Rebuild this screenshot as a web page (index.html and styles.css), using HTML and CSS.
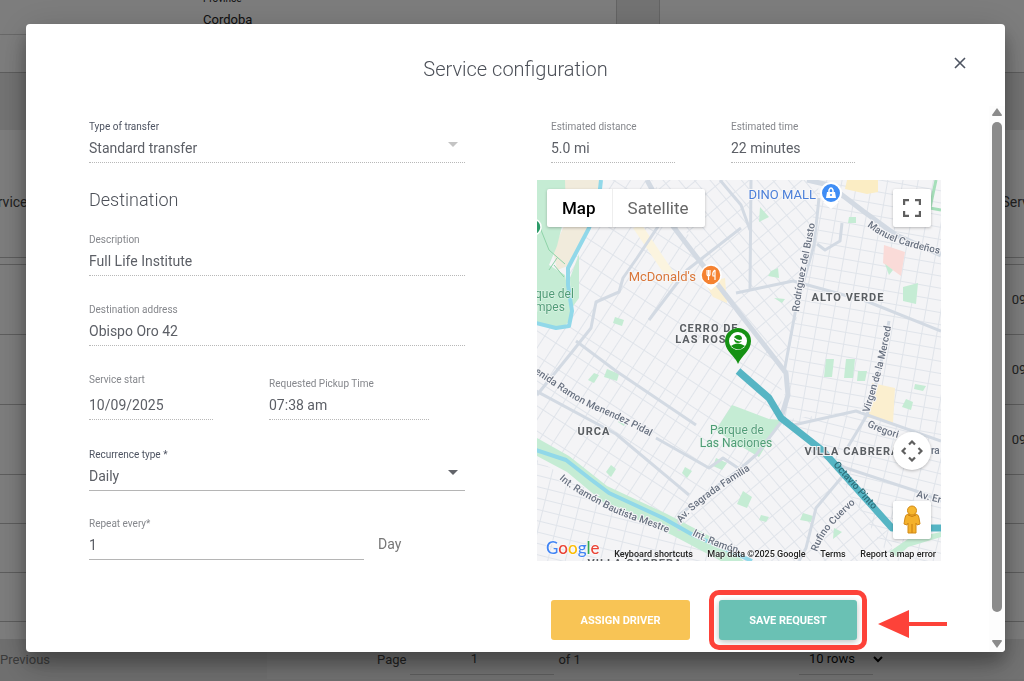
FILE: index.html
```html
<!DOCTYPE html>
<html lang="en">
<head>
<meta charset="utf-8">
<title>Service configuration</title>
<link rel="stylesheet" href="styles.css">
</head>
<body>
<div class="page">
  <div class="cards">
    <section class="card card-main">
      <div class="province"><span class="province-label">Province</span><span>Cordoba</span></div>
      <div class="card-row"></div>
    </section>
    <section class="card card-side"></section>
  </div>
  <section class="list">
    <div class="list-head"><span>Service</span><span>Service</span></div>
    <div class="list-gap"></div>
    <div class="list-row"><span>09:00</span></div>
    <div class="list-row"><span>09:00</span></div>
    <div class="list-row"><span>09:00</span></div>
    <div class="list-row short"></div>
    <div class="list-row short"></div>
    <div class="list-row short"></div>
  </section>
  <footer class="pager">
    <button class="pager-prev" type="button">Previous</button>
    <div class="pager-page"><label for="page">Page</label><input id="page" value="1"><span>of 1</span></div>
    <div class="pager-size">
      <select aria-label="Rows per page"><option>10 rows</option></select>
      <svg width="10" height="7" viewBox="0 0 10 7"><path d="M1 1l4 4 4-4" fill="none" stroke="#000" stroke-width="2"/></svg>
    </div>
  </footer>
</div>

<div class="overlay">
  <div class="modal" role="dialog" aria-labelledby="title">
    <header class="modal-head">
      <h1 id="title">Service configuration</h1>
      <button class="close" type="button" aria-label="Close"><svg width="12" height="12" viewBox="0 0 12 12"><path d="M1 1l10 10M11 1L1 11" stroke="#4d5461" stroke-width="1.6"/></svg></button>
    </header>
    <div class="modal-body">
      <form class="form">
        <div class="column">
          <div class="field strong muted">
            <label for="type">Type of transfer</label>
            <select id="type"><option>Standard transfer</option></select>
            <svg class="caret" width="10" height="5" viewBox="0 0 10 5"><path d="M0 0h10L5 5z"/></svg>
          </div>
          <h2>Destination</h2>
          <div class="field"><label for="desc">Description</label><input id="desc" value="Full Life Institute"></div>
          <div class="field next"><label for="addr">Destination address</label><input id="addr" value="Obispo Oro 42"></div>
          <div class="schedule">
            <div class="field tall"><label for="start">Service start</label><input id="start" value="10/09/2025"></div>
            <div class="field"><label for="pickup">Requested Pickup Time</label><input id="pickup" value="07:38 am"></div>
          </div>
          <div class="field solid strong recurrence">
            <label for="rec">Recurrence type *</label>
            <select id="rec"><option>Daily</option></select>
            <svg class="caret" width="10" height="5" viewBox="0 0 10 5"><path d="M0 0h10L5 5z"/></svg>
          </div>
          <div class="repeat">
            <div class="field solid"><label for="rep">Repeat every*</label><input id="rep" value="1"></div>
            <span>Day</span>
          </div>
        </div>

        <div class="column">
          <div class="estimates">
            <div class="field"><label for="dist">Estimated distance</label><input id="dist" value="5.0 mi" readonly></div>
            <div class="field"><label for="time">Estimated time</label><input id="time" value="22 minutes" readonly></div>
          </div>
          <div class="map">
            <svg class="map-art" viewBox="0 0 404 381" role="img" aria-label="Route map">
              <defs>
                <pattern id="g1" width="13" height="21" patternUnits="userSpaceOnUse" patternTransform="rotate(33)"><path d="M0 0H13M0 0V21" class="st"/></pattern>
                <pattern id="g2" width="15" height="12" patternUnits="userSpaceOnUse" patternTransform="rotate(10)"><path d="M0 0H15M0 0V12" class="st"/></pattern>
                <pattern id="g3" width="12" height="17" patternUnits="userSpaceOnUse" patternTransform="rotate(-40)"><path d="M0 0H12M0 0V17" class="st"/></pattern>
                <pattern id="g4" width="17" height="11" patternUnits="userSpaceOnUse" patternTransform="rotate(14)"><path d="M0 0H17M0 0V11" class="st"/></pattern>
                <path id="p-ave" d="M-7 190C25 211 35 220 58 230S95 246 134 268"/>
                <path id="p-int" d="M22 299C38 313 50 318 70 329S112 343 146 360"/>
                <path id="p-int2" d="M155 355Q183 370 215 377"/>
                <path id="p-sag" d="M144 343C155 329 173 315 218 287"/>
                <path id="p-rod" d="M262 132C265 103 272 78 280 32"/>
                <path id="p-man" d="M330 46C350 62 370 67 412 76"/>
                <path id="p-vir" d="M332 233C340 207 349 180 356 134"/>
                <path id="p-oct" d="M296 285L346 341"/>
                <path id="p-ruf" d="M280 372C287 352 299 340 330 313"/>
                <path id="p-gre" d="M330 246Q344 254 368 260"/>
              </defs>
              <rect width="404" height="381" fill="#f4f4f6"/>
              <path d="M64 0H115L205 135 245 190 244 238 205 290 140 345 0 270V140L32 146V88z" fill="url(#g1)"/>
              <path d="M115 0H282L277 65 247 193 204 135z" fill="url(#g3)"/>
              <path d="M282 0H404V261L319 231 244 246 250 190z" fill="url(#g2)"/>
              <path d="M244 240L319 231 404 261V381H355L286 271z" fill="url(#g4)"/>
              <path d="M244 240L355 348V381H190L140 345 204 290z" fill="url(#g3)"/>
              <path d="M0 280L72 322 190 381H0z" fill="url(#g4)"/>

              <path d="M26 0H64L61 20 51 49 31 86 20 90 16 70 28 44z" fill="#f1ebdc"/>
              <path d="M310 0H341V12L330 14 308 9z" fill="#fbedc4"/>
              <path d="M96 48L105 45 140 97 134 104z" fill="#fbf4df"/>
              <path d="M168 103L188 98 190 123 176 117z" fill="#fbf0d3"/>
              <path d="M335 203L358 208 356 243 329 237z" fill="#fbefcf"/>
              <path d="M347 65L368 72 364 96 346 83z" fill="#fadbd8"/>
              <g fill="#c5ecd4">
                <path d="M0 0H28L29 30 20 66 12 85 28 95 31 112 35 139 25 148 0 145z"/>
                <path d="M42 74L42 118 34 129 33 98z"/>
                <path d="M0 258L32 276 70 306 130 334 180 360 207 381H184L135 355 72 327 30 292 0 276z"/>
                <path d="M195 225L232 239 244 240 222 277 193 260 179 250z"/>
                <path d="M223 27L232 37 222 42zM312 37H319V43H311zM234 91L241 88 242 98 231 96zM237 118L248 119 245 123zM366 107L381 103 379 124 366 121zM348 84L356 90 352 95zM78 137L87 140 85 146 76 143z"/>
                <path d="M57 193L62 195 57 203 51 200zM70 189L82 194 80 201 67 197zM74 285L79 289 74 297 69 292zM179 278L190 283 185 290 176 286zM148 287L155 291 150 298 145 293zM84 238L90 241 87 246 81 242z"/>
                <path d="M289 179H297L295 197H287zM309 179H318L316 198H307zM321 191H330L328 201H320zM378 204L389 206 386 211 377 209zM369 219L376 222 374 230 365 227zM206 311L215 317 210 328 200 324zM266 333L276 336 274 342 263 340zM297 348L305 352 296 359zM224 335L232 337 229 342 222 340z"/>
                <path d="M352 372L371 359 404 352V357L371 367 360 377z"/>
              </g>
              <path d="M399 0L393 28 404 30" fill="none" stroke="#a6dfba" stroke-width="3"/>
              <g fill="none" stroke="#d3dae3" stroke-width="3" stroke-linejoin="round">
                <path d="M110 0L132 41 204 135 249 193 251 215 244 238" stroke-width="5"/>
                <path d="M122 45L100 78 86 98 82 112 59 122 54 148 35 172 0 215"/>
                <path d="M-1 211L79 254 152 315M39 161L79 191 159 245M119 258L172 288 186 278 204 290"/>
                <path d="M214 0L213 110M199 113L256 101 329 121 404 151"/>
                <path d="M282 18L277 65 259 128 247 193"/>
                <path d="M270 0L292 5 326 31 359 55 404 75" stroke-width="5"/>
                <path d="M252 246L319 231 404 261M352 141L342 193 330 235 309 270M269 268L309 288 379 311 404 321"/>
                <path d="M309 292L279 328 269 368 262 381M142 351V335L204 288 219 275 245 241"/>
                <path d="M204 48L150 90 112 140M305 43L303 61 288 70 280 64M183 0L204 25 213 50"/>
              </g>
              <g fill="none" stroke="#91d8e9" stroke-width="4" stroke-linejoin="round">
                <path d="M64 0L62 18 52 48 31 88V105L35 131 32 146 19 148-1 143"/>
                <path d="M-1 270L29 280 52 298 72 313 126 338 156 355 186 368 215 381"/>
              </g>
              <path d="M0 40L12 70 28 84M17 85L27 97M20 78L12 90" fill="none" stroke="#8ed3a8" stroke-width="1"/>
              <path d="M201 191L232 218 244 238 286 271 355 348H404" fill="none" stroke="#56b5c4" stroke-width="7" stroke-linejoin="round"/>

              <g class="road">
                <text><textPath href="#p-ave">venida Ramon Menendez Pidal</textPath></text>
                <text><textPath href="#p-int">Int. Ramón Bautista Mestre</textPath></text>
                <text><textPath href="#p-int2">Int. Ramón</textPath></text>
                <text><textPath href="#p-sag">Av. Sagrada Familia</textPath></text>
                <text><textPath href="#p-rod">Rodríguez del Busto</textPath></text>
                <text><textPath href="#p-man">Manuel Cardeños</textPath></text>
                <text><textPath href="#p-vir">Virgen de la Merced</textPath></text>
                <text class="on-route"><textPath href="#p-oct">Octavio Pinto</textPath></text>
                <text><textPath href="#p-ruf">Rufino Cuervo</textPath></text>
                <text><textPath href="#p-gre">Gregori</textPath></text>
                <text transform="translate(379 317) rotate(14)">Av. Er</text>
                <text x="394" y="274">ra</text>
              </g>
              <g class="district" text-anchor="middle">
                <text x="172" y="152">CERRO DE</text>
                <text x="172" y="163">LAS ROSAS</text>
                <text x="311" y="121">ALTO VERDE</text>
                <text x="57" y="255">URCA</text>
                <text x="315" y="275">VILLA CABRERA</text>
                <text x="98" y="387">VILLA CABRERA</text>
              </g>
              <g class="park">
                <text x="-2" y="118">que del</text><text x="-2" y="131">mpes</text>
                <text x="200" y="254" text-anchor="middle">Parque de</text><text x="199" y="267" text-anchor="middle">Las Naciones</text>
              </g>
              <text class="poi" x="159" y="101" text-anchor="end" fill="#d9773a">McDonald's</text>
              <text class="poi" x="279" y="19" text-anchor="end" fill="#4b7fd9">DINO MALL</text>
              <circle cx="-4" cy="47" r="8" fill="#2b9a68" stroke="#fff" stroke-width="1.5"/>
              <g transform="translate(174 95)"><path d="M-7 9L0 15 7 9z" fill="#fff"/><circle r="10" fill="#f58231" stroke="#fff" stroke-width="1.5"/><path d="M-4-5V-1Q-4 1-2.500 1V5M-1-5V-1Q-1 1-2.500 1M-2.500-5V1M4-5V5M4-5Q1-3 2 1H4" fill="none" stroke="#fff" stroke-width="1.200"/></g>
              <g transform="translate(294 13)"><path d="M-8 9L0 16 8 9z" fill="#fff"/><circle r="10" fill="#3f8df5" stroke="#fff" stroke-width="2"/><path d="M-4-1H4L5 5H-5z" fill="#fff"/><path d="M-2 0V-3Q0-7 2-3V0" fill="none" stroke="#fff" stroke-width="1.500"/><circle cy="2" r="1" fill="#3f8df5"/></g>
              <g transform="translate(201 184)"><path d="M0 0C-3-8-13-13-13-23A13 13 0 0 1 13-23C13-13 3-8 0 0z" fill="#159113"/><circle cy="-23" r="9" fill="#fff"/><circle cy="-25" r="4" fill="#159113"/><path d="M-7-18Q0-23 7-18Q0-11-7-18z" fill="#159113"/><path d="M-4-26Q0-22 4-24" fill="none" stroke="#fff" stroke-width="1.500"/></g>
            </svg>
            <div class="map-type"><button type="button" class="active">Map</button><button type="button">Satellite</button></div>
            <button class="map-btn full" type="button" aria-label="Fullscreen"><svg width="18" height="18" viewBox="0 0 18 18"><path d="M1 6V1H6M12 1H17V6M17 12V17H12M6 17H1V12" fill="none" stroke="#5f5f5f" stroke-width="2.400"/></svg></button>
            <button class="map-btn pan" type="button" aria-label="Camera controls"><svg width="22" height="22" viewBox="0 0 22 22"><path d="M8 4.500L11 1.500 14 4.500M8 17.500L11 20.500 14 17.500M4.500 8L1.500 11 4.500 14M17.500 8L20.500 11 17.500 14" fill="none" stroke="#5f5f5f" stroke-width="2.200"/></svg></button>
            <button class="map-btn person" type="button" aria-label="Street View"><svg width="18" height="30" viewBox="0 0 18 30"><path d="M5 9H13Q16 10 16 13L17 19 14 20 13 18V28H5V18L4 20 1 19 2 13Q2 10 5 9z" fill="#f4b12c" stroke="#d28a16"/><circle cx="9" cy="5.500" r="4.500" fill="#f7b72f" stroke="#d28a16"/><path d="M9 19V28M5 10Q9 13 13 10" stroke="#c97d10" fill="none"/></svg></button>
            <div class="map-foot">
              <span class="logo"><b class="c1">G</b><b class="c2">o</b><b class="c3">o</b><b class="c1">g</b><b class="c4">l</b><b class="c2">e</b></span>
              <button type="button">Keyboard shortcuts</button><span>Map data ©2025 Google</span><a href="#terms">Terms</a><a href="#report">Report a map error</a>
            </div>
          </div>
          <div class="actions">
            <button class="btn assign" type="button">ASSIGN DRIVER</button>
            <div class="callout">
              <button class="btn save" type="submit">SAVE REQUEST</button>
              <svg class="arrow" width="69" height="28" viewBox="0 0 69 28"><path d="M0 14L31 0V12H69V16H31V28z" fill="#fd4239"/></svg>
            </div>
          </div>
        </div>
      </form>
      <div class="scroll" aria-hidden="true">
        <svg width="10" height="8" viewBox="0 0 10 8"><path d="M5 0L10 7Q10 8 9 8H1Q0 8 0 7z"/></svg>
        <div class="thumb"></div>
        <svg width="10" height="8" viewBox="0 0 10 8"><path d="M5 8L10 1Q10 0 9 0H1Q0 0 0 1z"/></svg>
      </div>
    </div>
  </div>
</div>
</body>
</html>
```
FILE: styles.css
```css
* { box-sizing: border-box; }
body { margin: 0; font-family: Roboto, "Liberation Sans", sans-serif; font-size: 13px; color: #5c5f66; }
button, input, select { font: inherit; color: inherit; border: 0; background: none; padding: 0; margin: 0; border-radius: 0; min-width: 0; }
select { appearance: none; }

.page { height: 100vh; overflow: hidden; display: flex; flex-direction: column; background: #e6e6e6; color: #444; }
.cards { display: flex; gap: 42px; height: 73px; margin-bottom: 57px; flex: none; }
.card { background: #fafafa; border-bottom: 1px solid #bbb; }
.card-main { flex: 617; border-right: 1px solid #c8c8c8; }
.card-side { flex: 365; border-left: 1px solid #c8c8c8; }
.province { height: 35px; margin-top: -7px; padding-left: 203px; display: flex; flex-direction: column; gap: 7px; line-height: 15px; color: #222; }
.province-label { font-size: 10px; line-height: 12px; }
.card-row { margin-top: 6px; border-top: 1px solid #d0d0d0; }
.list { flex: 1; background: #fafafa; }
.list-head { height: 128px; padding-top: 17px; display: flex; align-items: center; justify-content: space-between; font-size: 14px; border-bottom: 1px solid #bbb; }
.list-head span { margin: 0 -23px 0 -18px; }
.list-gap { height: 7px; border-bottom: 1px solid #bbb; }
.list-row { height: 70px; display: flex; align-items: center; justify-content: flex-end; border-bottom: 1px solid #bbb; }
.list-row span { margin-right: -20px; }
.list-row.short { height: 49px; }
.pager { height: 42px; flex: none; padding-bottom: 2px; background: #dedede; display: grid; grid-template-columns: 267fr 400fr 357fr; align-items: center; }
.pager-prev { justify-self: start; color: #777; }
.pager > div { height: 100%; display: flex; align-items: center; background: #e4e4e4; }
.pager-page { padding-left: 110px; }
.pager-page input { width: 144px; height: 32px; margin: 0 4px; padding-right: 16px; text-align: center; border-bottom: 1px solid #bbb; }
.pager-size { padding-left: 132px; color: #111; }
.pager-size select { width: 74px; height: 32px; padding-left: 10px; border-bottom: 1px solid #bbb; }

.overlay { position: fixed; inset: 0; padding: 24px 19px 29px 26px; display: grid; background: rgba(0, 0, 0, .5); }
.modal { min-height: 0; display: flex; flex-direction: column; background: #fff; border-radius: 4px; overflow: hidden; box-shadow: 0 10px 15px rgba(0, 0, 0, .2), 0 16px 30px rgba(0, 0, 0, .16), 0 4px 36px rgba(0, 0, 0, .14); }
.modal-head { height: 82px; flex: none; display: grid; grid-template-columns: 70px 1fr 70px; padding-top: 26px; align-items: start; }
h1 { grid-column: 2; margin: 6px 0 0; font-size: 20px; line-height: 26px; font-weight: 300; text-align: center; color: #4c5058; }
.close { width: 26px; height: 26px; margin-left: 12px; display: grid; place-items: center; }
.modal-body { flex: 1; min-height: 0; display: flex; }
.form { flex: 1; min-width: 0; padding: 15px 48px 0 63px; display: grid; grid-template-columns: 376fr 404fr; gap: 72px; }
.column { min-width: 0; }
h2 { margin: 25px 0 22px; font-size: 18px; line-height: 24px; font-weight: 300; color: #4c5058; }
.field { position: relative; display: flex; flex-direction: column; gap: 4px; }
.field label { font-size: 10px; line-height: 12px; color: #85878c; }
.field.strong label { color: #4d5361; }
.field input, .field select { width: 100%; height: 26px; padding-bottom: 4px; font-size: 14px; line-height: 20px; border-bottom: 1px dotted #b8b8b8; outline: 0; }
.field.solid input, .field.solid select { border-bottom: 1px solid #b5b5b5; }
.field.tall { gap: 8px; }
.next, .schedule { margin-top: 28px; }
.recurrence { margin-top: 29px; }
.caret { position: absolute; right: 7px; bottom: 16px; fill: #62646a; }
.muted .caret { fill: #c4c4c4; }
.schedule { display: grid; grid-template-columns: 124fr 196fr; column-gap: 56px; align-items: end; }
.schedule .field + .field { margin-right: 36px; }
.repeat { margin-top: 27px; display: flex; gap: 14px; align-items: flex-end; }
.repeat .field { flex: 0 1 275px; }
.repeat span { font-size: 14px; line-height: 16px; margin-bottom: 8px; color: #777; }
.estimates { display: grid; grid-template-columns: 1fr 1fr; gap: 56px; padding: 0 86px 0 14px; }

.map { position: relative; margin-top: 17px; overflow: hidden; }
.map-art { display: block; width: 100%; }
.st { fill: none; stroke: #e0e4ea; stroke-width: 2; }
.road { font-size: 10px; font-weight: 500; fill: #687180; stroke: #f5f5f7; stroke-width: 2px; paint-order: stroke; }
.road .on-route { fill: #2e6f7b; stroke: none; }
.district { font-size: 11px; font-weight: 700; letter-spacing: 1px; fill: #5a5e62; stroke: #f5f5f7; stroke-width: 2px; paint-order: stroke; }
.park { font-size: 12px; fill: #4f9c76; stroke: #e5f5eb; stroke-width: 1px; paint-order: stroke; }
.poi { font-size: 13px; stroke: #f7f7f8; stroke-width: 2px; paint-order: stroke; }
.map-type { position: absolute; left: 10px; top: 9px; height: 38px; display: flex; background: #fff; border-radius: 2px; box-shadow: 0 1px 3px rgba(0, 0, 0, .25); font-size: 17px; color: #666; }
.map-type button { padding: 0 16px 0 15px; }
.map-type .active { font-weight: 500; color: #000; border-right: 1px solid #eee; }
.map-btn { position: absolute; right: 10px; width: 38px; height: 38px; display: grid; place-items: center; background: #fff; border-radius: 2px; box-shadow: 0 1px 3px rgba(0, 0, 0, .25); }
.full { top: 9px; }
.pan { bottom: 91px; border-radius: 50%; }
.person { bottom: 22px; }
.map-foot { position: absolute; left: 9px; right: 5px; bottom: 0; height: 24px; display: flex; justify-content: space-between; align-items: flex-end; font-size: 9px; font-weight: 500; line-height: 13px; color: #222; text-shadow: 0 0 2px #fff, 0 0 2px #fff; white-space: nowrap; }
.map-foot a { color: inherit; text-decoration: none; }
.logo { align-self: flex-start; font-family: Lato, sans-serif; font-size: 17px; line-height: 22px; }
.logo b { font-weight: 500; }
.c1 { color: #4285f4; } .c2 { color: #ea4335; } .c3 { color: #fbbc05; } .c4 { color: #34a853; }

.actions { margin-top: 39px; padding: 0 84px 0 14px; display: grid; grid-template-columns: 139fr 138fr; gap: 29px; }
.btn { width: 100%; height: 40px; border-radius: 3px; color: #fff; font-size: 11px; font-weight: 700; }
.assign { background: #f8c455; }
.save { background: #6ac1b4; box-shadow: 0 2px 6px rgba(0, 0, 0, .25); }
.callout { position: relative; }
.callout::after { content: ""; position: absolute; inset: -10px; border: 5px solid #fd4239; border-radius: 10px; pointer-events: none; }
.arrow { position: absolute; left: 100%; top: 10px; margin-left: 21px; }
.scroll { width: 16px; padding: 2px 0 4px; display: flex; flex-direction: column; align-items: center; gap: 6px; background: #fdfdfd; }
.scroll svg { fill: #8b8b8b; flex: none; }
.thumb { width: 10px; flex: 1; margin-bottom: 22px; border-radius: 5px; background: #8b8b8b; }
```
